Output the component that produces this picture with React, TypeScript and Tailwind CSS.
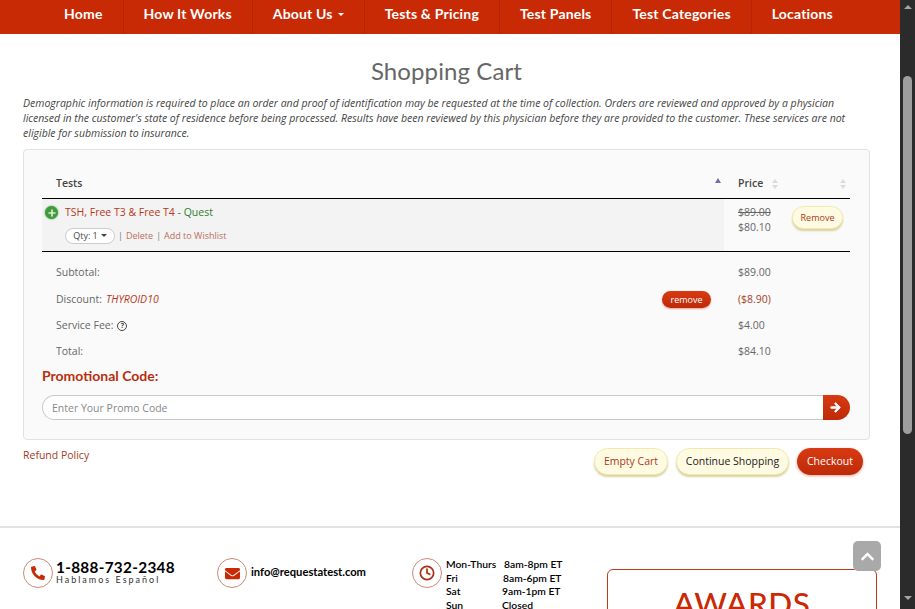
import { Clock, Plus } from 'lucide-react';
import { FaArrowRight, FaChevronUp, FaEnvelope, FaPhoneAlt } from 'react-icons/fa';

const navItems = ['Home', 'How It Works', 'About Us', 'Tests & Pricing', 'Test Panels', 'Test Categories', 'Locations'];

const SortArrows = () => (
  <svg width="6" height="10" viewBox="0 0 6 10" className="fill-[#d8dbe0]">
    <path d="M3 0 6 4H0z" />
    <path d="M3 10 0 6h6z" />
  </svg>
);

const Summary = ({ label, price, priceClass, children }: { label: React.ReactNode; price: string; priceClass?: string; children?: React.ReactNode }) => (
  <div className="grid h-[26.3px] grid-cols-[682px_1fr] items-center text-[10.5px] text-[#666]">
    <div className="flex items-center justify-between pl-[14px] pr-[13px]">
      <span className="flex items-center gap-1">{label}</span>
      {children}
    </div>
    <div className={`pl-[14px] ${priceClass ?? ''}`}>{price}</div>
  </div>
);

export default function App() {
  return (
    <div className="relative flex h-[609px] w-[915px] overflow-hidden bg-white font-['Open_Sans',sans-serif]">
      <div className="w-[900px] shrink-0">
        <nav className="flex h-[34px] bg-[#c92a06] pl-[44px] font-['Lato',sans-serif] text-[14px] font-bold text-white">
          {navItems.map((item, i) => (
            <a
              key={item}
              className={`flex h-full items-center px-[20px] pb-[7px] tracking-[0.18px] ${i < navItems.length - 1 ? 'border-r border-[#b52505]' : ''}`}
            >
              {item}
              {item === 'About Us' && <span className="ml-[5px] mt-[1px] border-x-[3px] border-t-[3px] border-x-transparent border-t-white" />}
            </a>
          ))}
        </nav>

        <main className="px-[23px] pr-[30px]">
          <h1 className="mt-[22px] text-center font-['Lato',sans-serif] text-[24px] leading-[30px] tracking-[0.1px] text-[#666]">Shopping Cart</h1>
          <p className="mt-[10px] w-[835px] text-[10.5px] italic leading-[15px] text-[#444]">
            Demographic information is required to place an order and proof of identification may be requested at the time of collection. Orders are reviewed and approved by a physician licensed in the customer's state of residence before being processed. Results have been reviewed by this physician before they are provided to the customer. These services are not eligible for submission to insurance.
          </p>

          <section className="mt-[8px] h-[291px] w-[847px] rounded-[4px] border border-[#e2e2e2] bg-[#fafafa] pl-[18px] pr-[19px] pt-[18px]">
            <div className="grid h-[31px] grid-cols-[682px_54px_72px] items-center border-b border-black pt-[1px] text-[10.5px] font-semibold text-[#444]">
              <div className="flex items-center justify-between pl-[14px] pr-[3px]">
                Tests
                <svg width="6" height="5" viewBox="0 0 6 5" className="mb-[6px] fill-[#6f70ad]"><path d="M3 0 6 5H0z" /></svg>
              </div>
              <div className="flex items-center justify-between pl-[14px]">Price <SortArrows /></div>
              <div className="flex justify-end pr-[4px]"><SortArrows /></div>
            </div>

            <div className="grid h-[53px] grid-cols-[682px_54px_72px] border-b border-black">
              <div className="bg-[#f3f3f3] pl-[3px]">
                <div className="mt-[6px] flex items-center gap-[7px] text-[10.5px]">
                  <span className="flex h-[13px] w-[13px] items-center justify-center rounded-full bg-[#3f9b3c] shadow-[0_0_2px_#3f9b3c]">
                    <Plus size={10} strokeWidth={4} className="text-[#d8f0d4]" />
                  </span>
                  <span className="text-[#b8391a]">TSH, Free T3 &amp; Free T4 <span className="text-[#2f7d32]">- Quest</span></span>
                </div>
                <div className="ml-[20px] mt-[7px] flex items-center text-[9px] text-[#bb6f60]">
                  <span className="flex h-[16px] w-[50px] items-center justify-center gap-[3px] rounded-full border border-[#ccc] bg-white text-[#444]">
                    Qty: 1 <span className="border-x-[3px] border-t-[3px] border-x-transparent border-t-[#444]" />
                  </span>
                  <span className="mx-[3px] text-[#777]">|</span>Delete<span className="mx-[3px] text-[#777]">|</span>Add to Wishlist
                </div>
              </div>
              <div className="pl-[14px] pt-[6px] text-[10.5px] leading-[15px] text-[#666]">
                <div className="line-through">$89.00</div>
                <div>$80.10</div>
              </div>
              <div className="flex justify-end pr-[7px] pt-[7px]">
                <button className="h-[23px] w-[51px] rounded-full border border-[#f4e9ac] bg-[#fffbe2] text-[9px] text-[#a83a1c] shadow-[0_2px_2px_#d9d2a0]">Remove</button>
              </div>
            </div>

            <div className="mt-[8px]">
              <Summary label="Subtotal:" price="$89.00" />
              <Summary label={<>Discount: <span className="italic text-[#b8391a]">THYROID10</span></>} price="($8.90)" priceClass="text-[#a8412a]">
                <button className="h-[17px] w-[49px] rounded-full bg-gradient-to-b from-[#d83a12] to-[#bd2a08] text-[9px] text-white shadow-[0_1px_2px_#e8a090]">remove</button>
              </Summary>
              <Summary
                label={<>Service Fee: <span className="flex h-[10px] w-[10px] items-center justify-center rounded-full border border-[#444] text-[7px] font-bold leading-none text-[#444]">?</span></>}
                price="$4.00"
              />
              <Summary label="Total:" price="$84.10" />
            </div>

            <h2 className="mt-[2px] font-['Lato',sans-serif] text-[14px] font-bold leading-[18px] text-[#b82e0e]">Promotional Code:</h2>
            <div className="mt-[10px] flex h-[25px] w-[808px]">
              <div className="flex flex-1 items-center rounded-l-full border border-r-0 border-[#c8c8c8] bg-white pl-[9px] pt-[3px] text-[10.5px] text-[#888]">Enter Your Promo Code</div>
              <button className="flex w-[27px] items-center justify-center rounded-r-full bg-gradient-to-b from-[#d83a12] to-[#bd2a08] pr-[2px] text-white">
                <FaArrowRight size={11} className="stroke-current stroke-[40]" />
              </button>
            </div>
          </section>

          <div className="mt-[8px] flex w-[840px] items-start justify-between">
            <a className="mt-[1px] text-[10.5px] leading-[12px] text-[#a83a1c]">Refund Policy</a>
            <div className="flex gap-[8px]">
              <button className="h-[27px] w-[74px] rounded-full border border-[#f4e9ac] bg-[#fffbe2] text-[10.5px] text-[#a83a1c] shadow-[0_2px_2px_#d9d2a0]">Empty Cart</button>
              <button className="h-[27px] w-[113px] rounded-full border border-[#f4e9ac] bg-[#fffbe2] text-[10.5px] text-[#222] shadow-[0_2px_2px_#d9d2a0]">Continue Shopping</button>
              <button className="h-[27px] w-[66px] rounded-full bg-gradient-to-b from-[#d83a12] to-[#bd2a08] text-[10.5px] text-white shadow-[0_1px_3px_#e8a090]">Checkout</button>
            </div>
          </div>
        </main>

        <footer className="mt-[51px] grid grid-cols-[194px_195px_195px_270px] border-t-2 border-[#e3e3e3] pl-[23px] pt-[30px] font-['Lato',sans-serif] text-black">
          <div className="flex items-center gap-[3px] self-start">
            <span className="flex h-[30px] w-[30px] items-center justify-center rounded-full border border-[#c98a78] text-[#c92a06]"><FaPhoneAlt size={14} /></span>
            <div className="mb-[2px]">
              <div className="text-[15.3px] font-bold leading-[15px] tracking-[0.3px]">1-888-732-2348</div>
              <div className="text-[9px] leading-[9px] tracking-[2px] text-[#333]">Hablamos Español</div>
            </div>
          </div>
          <div className="flex items-center gap-[4px] self-start">
            <span className="flex h-[30px] w-[30px] items-center justify-center rounded-full border border-[#c98a78] text-[#c92a06]"><FaEnvelope size={15} /></span>
            <span className="mb-[2px] text-[11.2px] font-bold">info@requestatest.com</span>
          </div>
          <div className="flex items-start gap-[4px]">
            <span className="flex h-[30px] w-[30px] items-center justify-center rounded-full border border-[#c98a78] text-[#a83318]"><Clock size={16} strokeWidth={2.6} /></span>
            <div className="grid grid-cols-[56px_1fr] text-[10.3px] font-semibold leading-[13.6px]">
              <span>Mon-Thurs</span><span className="pl-[2px]">8am-8pm ET</span>
              <span>Fri</span><span className="pl-[1px]">8am-6pm ET</span>
              <span>Sat</span><span>9am-1pm ET</span>
              <span>Sun</span><span>Closed</span>
            </div>
          </div>
          <div className="mt-[11px] h-[60px] rounded-[6px] border border-[#c0391a] pt-[15px] text-center text-[31.5px] font-medium leading-[36px] tracking-[0.5px] text-[#c92a06]">AWARDS</div>
        </footer>
      </div>

      <div className="flex w-[15px] shrink-0 flex-col items-center bg-[#2b2b2b] pt-[5px]">
        <span className="border-x-[4px] border-b-[4px] border-x-transparent border-b-[#a5a5a5]" />
        <div className="mt-[67px] h-[358px] w-[9px] rounded-full bg-[#9e9e9e]" />
        <span className="mt-[162px] border-x-[4px] border-t-[4px] border-x-transparent border-t-[#a5a5a5]" />
      </div>

      <button className="absolute left-[853px] top-[541px] flex h-[30px] w-[28px] items-center justify-center rounded-[5px] bg-[#a9a9a9] text-white"><FaChevronUp size={15} /></button>
    </div>
  );
}
